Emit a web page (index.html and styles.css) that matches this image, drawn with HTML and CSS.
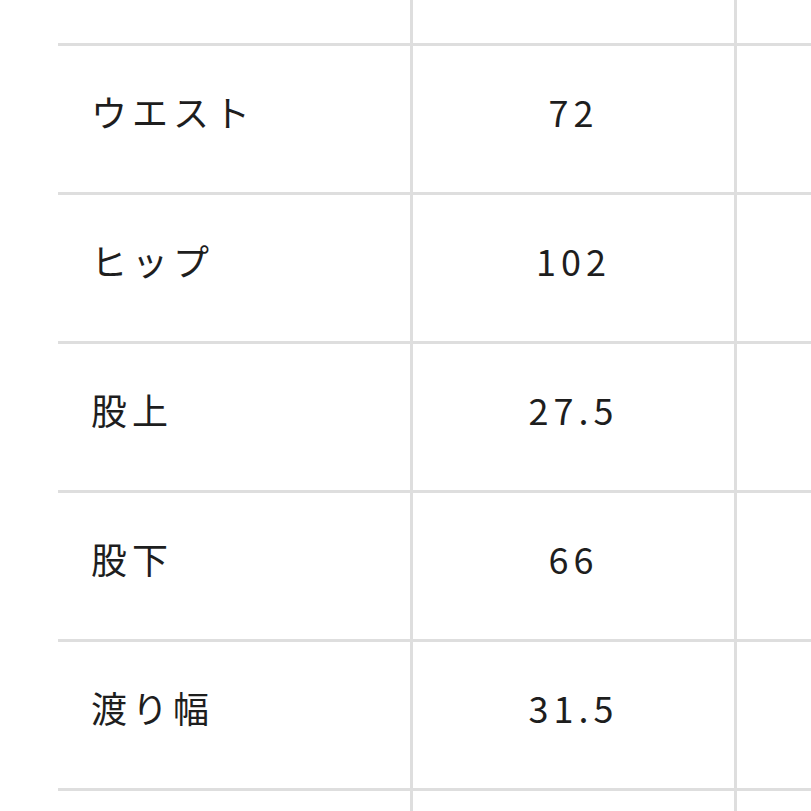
FILE: index.html
```html
<!DOCTYPE html>
<html lang="ja">
<head>
<meta charset="utf-8">
<link rel="stylesheet" href="styles.css">
</head>
<body>
<div class="sheet">
  <div class="cell head"></div><div class="cell head"></div><div class="cell head"></div>
  <div class="cell label">ウエスト</div><div class="cell num">72</div><div class="cell"></div>
  <div class="cell label">ヒップ</div><div class="cell num">102</div><div class="cell"></div>
  <div class="cell label">股上</div><div class="cell num">27.5</div><div class="cell"></div>
  <div class="cell label">股下</div><div class="cell num">66</div><div class="cell"></div>
  <div class="cell label">渡り幅</div><div class="cell num">31.5</div><div class="cell"></div>
  <div class="cell"></div><div class="cell"></div><div class="cell"></div>
</div>
</body>
</html>
```
FILE: styles.css
```css
html, body {
  margin: 0;
  padding: 0;
  background: #ffffff;
  overflow: hidden;
}
body {
  width: 811px;
  height: 811px;
  font-family: "Noto Sans CJK JP", "Noto Sans", sans-serif;
  color: #1e1e1e;
}
.sheet {
  margin-left: 58px;
  display: grid;
  grid-template-columns: 352px 321px 74px;
  grid-template-rows: 43px repeat(5, 146px) 20px;
  gap: 3px;
  background: #dedede;
}
.cell {
  background: #ffffff;
  display: flex;
  align-items: center;
  font-size: 36px;
  letter-spacing: 5px;
  line-height: 1;
  padding-bottom: 16px;
  box-sizing: border-box;
  overflow: hidden;
}
.label {
  padding-left: 33px;
}
.num {
  justify-content: center;
}
```
